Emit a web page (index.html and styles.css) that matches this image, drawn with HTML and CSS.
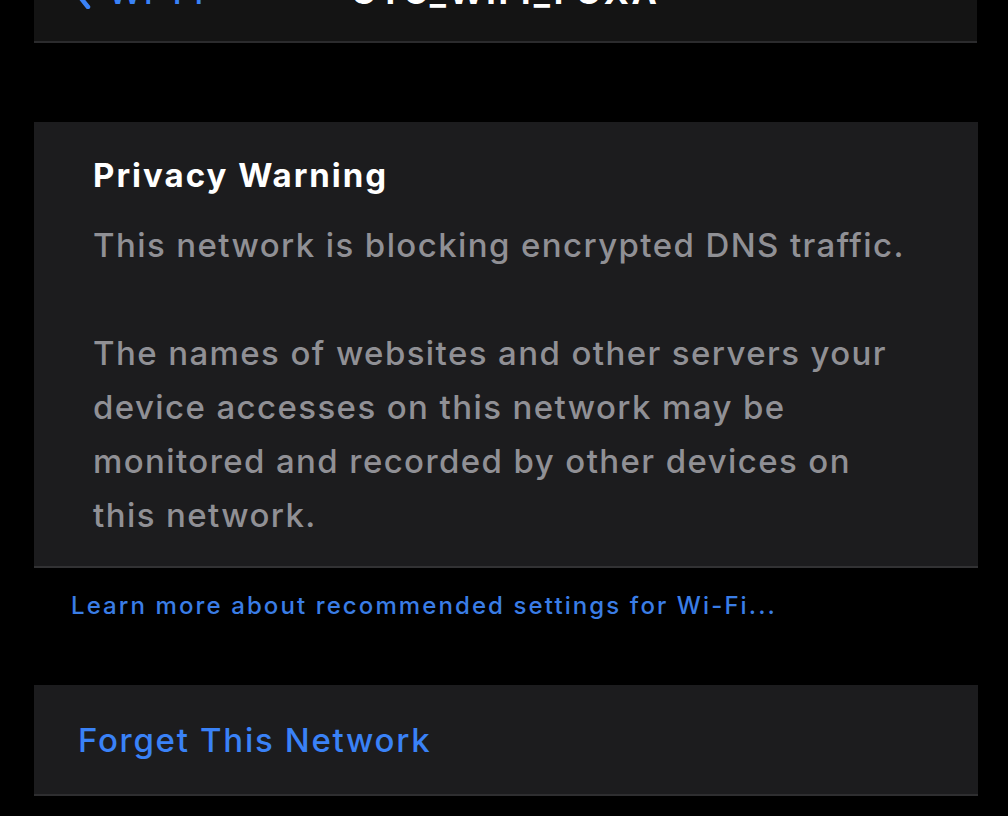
FILE: index.html
```html
<!DOCTYPE html>
<html>
<head>
<meta charset="utf-8">
<link rel="stylesheet" href="styles.css">
</head>
<body>
<div class="screen">
  <header class="navbar">
    <div class="nav-row">
      <div class="back">
        <svg class="chev" width="20" height="34" viewBox="0 0 20 34"><path d="M16 2 L4 17 L16 32" fill="none" stroke="#3a82f7" stroke-width="4.5" stroke-linecap="round" stroke-linejoin="round"/></svg>
        <span>Wi-Fi</span>
      </div>
      <div class="title">UTC_WIFI_FUXA</div>
    </div>
  </header>

  <section class="card warning">
    <h2 class="warn-title">Privacy Warning</h2>
    <p class="warn-text">This network is blocking encrypted DNS traffic.</p>
    <p class="warn-text gap">The names of websites and other servers your device accesses on this network may be monitored and recorded by other devices on this network.</p>
  </section>

  <div class="footer-link">Learn more about recommended settings for Wi-Fi...</div>

  <section class="card action">
    <span class="forget">Forget This Network</span>
  </section>
</div>
</body>
</html>
```

FILE: styles.css
```css
html, body {
  margin: 0;
  padding: 0;
  background: #000;
}
body {
  font-family: Inter, "Noto Sans", "Liberation Sans", sans-serif;
  width: 1008px;
  height: 816px;
  overflow: hidden;
}
.screen {
  display: flex;
  flex-direction: column;
}
.navbar {
  margin: 0 31px 0 34px;
  height: 41px;
  background: #141414;
  border-bottom: 2px solid #2b2b2d;
  overflow: hidden;
}
.nav-row {
  position: relative;
  height: 44px;
  margin-top: -30px;
  display: flex;
  align-items: center;
}
.back {
  display: flex;
  align-items: center;
  gap: 16px;
  padding-left: 38px;
  color: #3a82f7;
  font-size: 34px;
  font-weight: 500;
  line-height: 44px;
  letter-spacing: 2px;
}
.title {
  position: absolute;
  left: 0;
  right: 0;
  top: 0;
  text-align: center;
  color: #fff;
  font-weight: 700;
  font-size: 34px;
  line-height: 44px;
  letter-spacing: 2.6px;
  pointer-events: none;
}
.card {
  margin: 0 30px 0 34px;
  background: #1c1c1e;
}
.warning {
  margin-top: 79px;
  padding: 28px 68px 24px 59px;
  border-bottom: 2px solid #323234;
}
.warn-title {
  margin: 0 0 18px;
  color: #fff;
  font-size: 33px;
  font-weight: 700;
  line-height: 50px;
  letter-spacing: 2px;
}
.warn-text {
  margin: 0;
  color: #909095;
  font-size: 33px;
  font-weight: 500;
  line-height: 54px;
  letter-spacing: 1.4px;
}
.warn-text.gap {
  margin-top: 54px;
}
.footer-link {
  margin: 22px 0 0 71px;
  color: #3a7de6;
  font-size: 24px;
  font-weight: 500;
  line-height: 32px;
  letter-spacing: 2.1px;
}
.action {
  margin-top: 63px;
  height: 109px;
  display: flex;
  align-items: center;
  padding-left: 44px;
  border-bottom: 2px solid #2e2e30;
}
.forget {
  color: #3a82f7;
  font-size: 33px;
  font-weight: 500;
  letter-spacing: 1.7px;
}
```
